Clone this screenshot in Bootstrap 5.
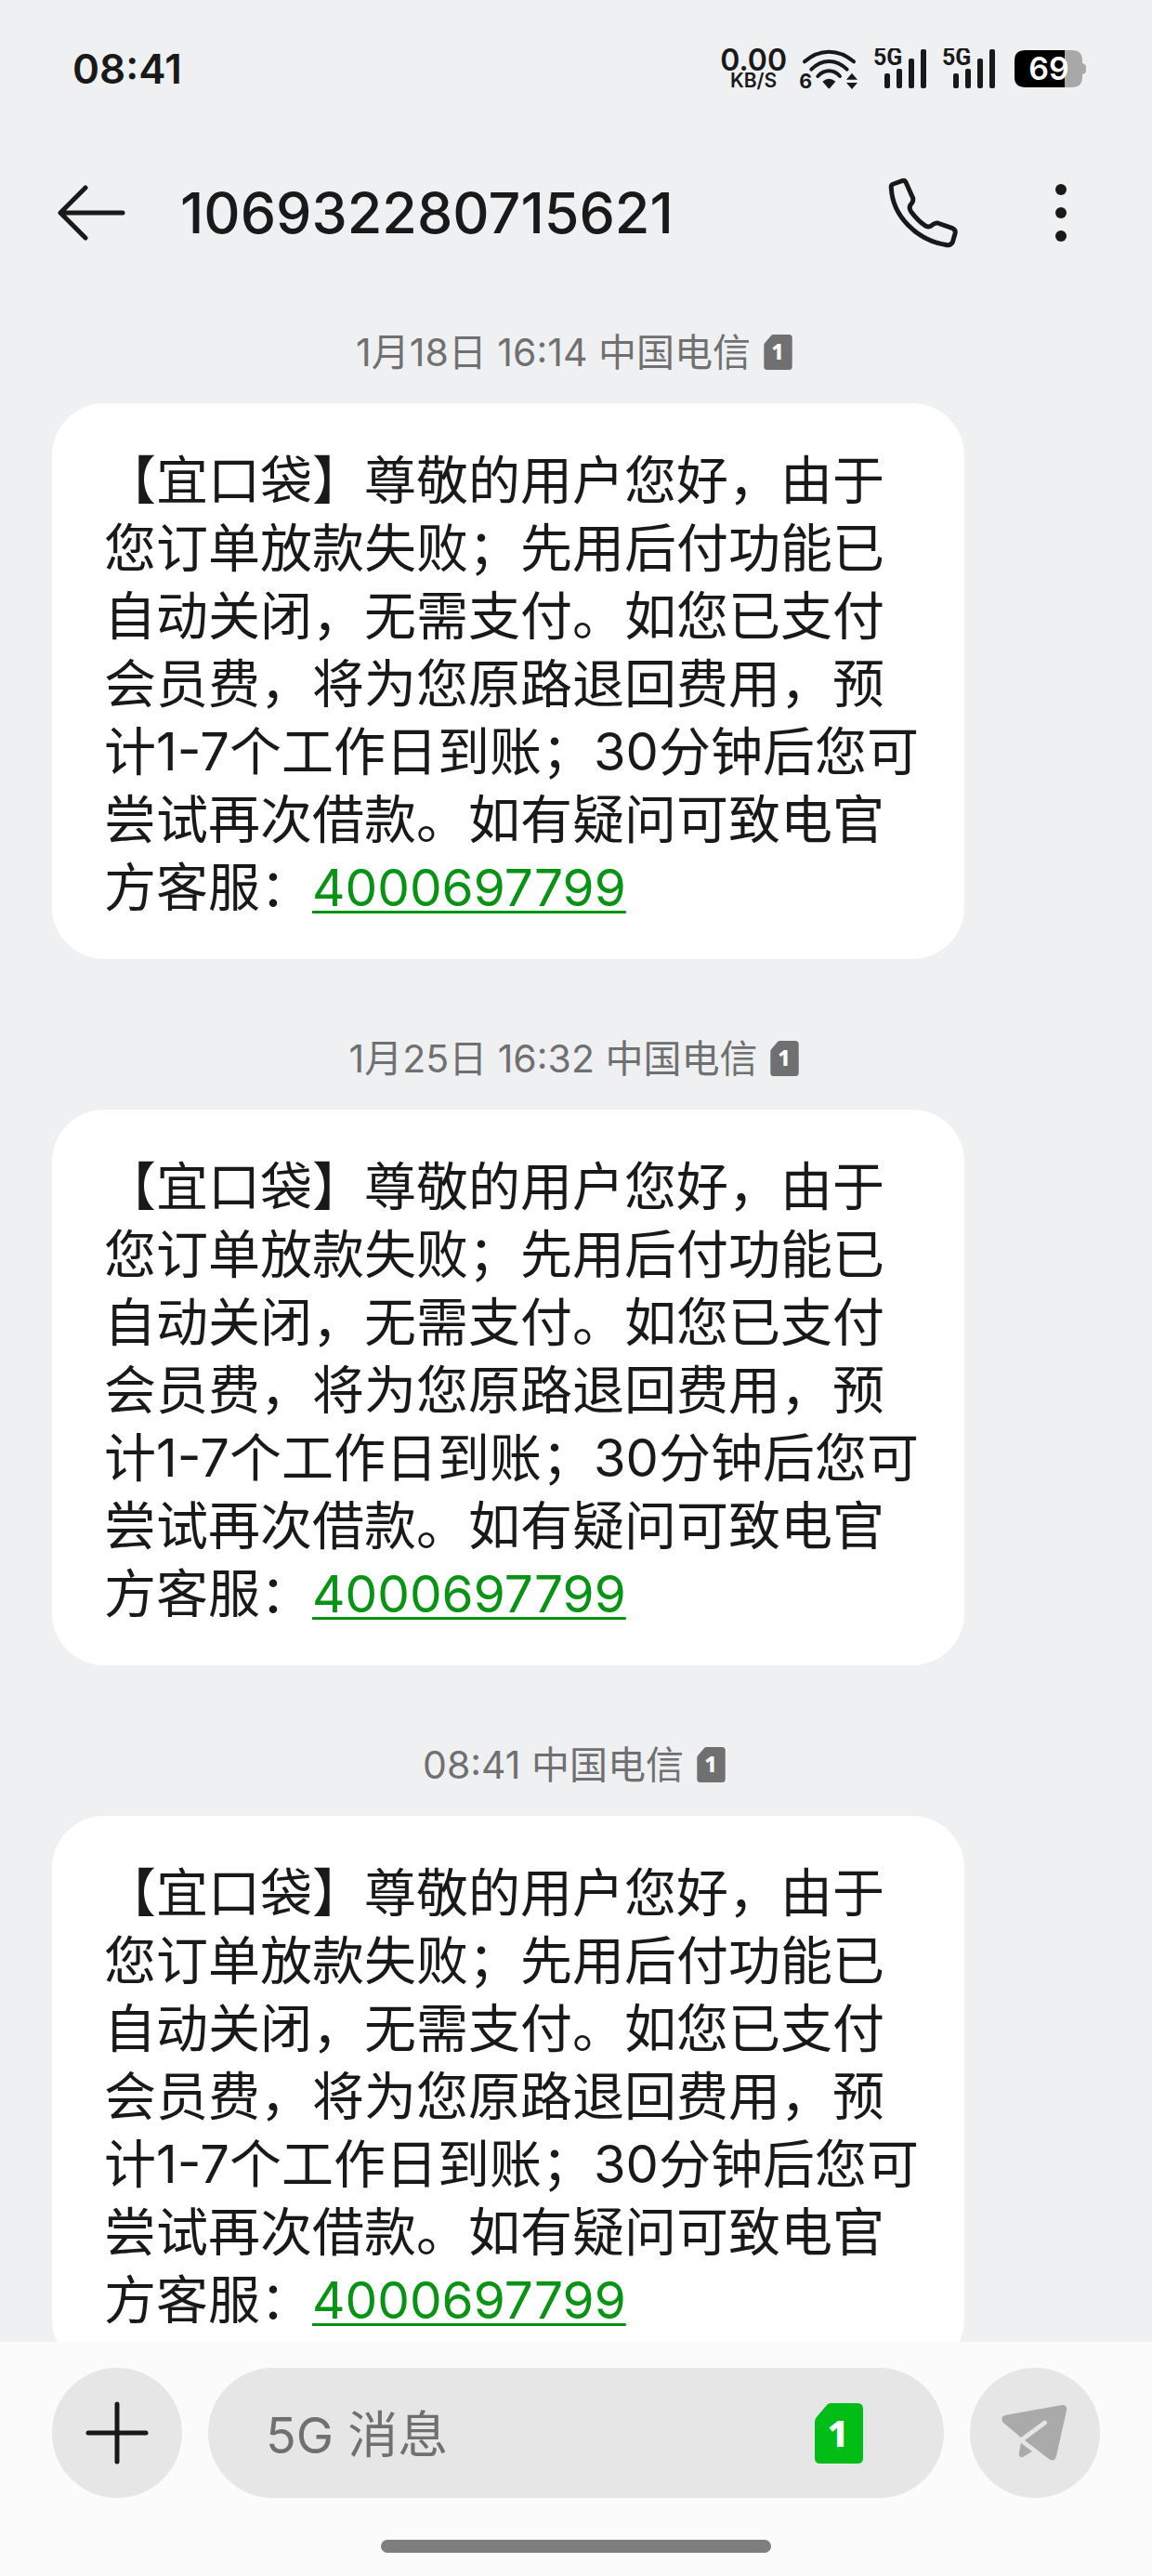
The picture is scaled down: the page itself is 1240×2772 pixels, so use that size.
<!DOCTYPE html>
<html lang="zh-CN">
<head>
<meta charset="utf-8">
<meta name="viewport" content="width=device-width, initial-scale=1">
<title>106932280715621</title>
<link href="https://cdn.jsdelivr.net/npm/bootstrap@5.3.0/dist/css/bootstrap.min.css" rel="stylesheet">
<style>
  body { font-family: Inter, "Noto Sans CJK SC", sans-serif; background: #eff0f2; color: #191919; }
  svg { display: block; flex: none; overflow: visible; }
  .status-bar { height: 148px; padding: 0 70px 0 78px; }
  .clock { font-size: 44px; line-height: 48px; font-weight: 600; }
  .status-icons { gap: 17px; }
  .net-speed { font-size: 32px; line-height: 26px; font-weight: 600; text-align: center; margin-right: -4px; }
  .net-unit { font-size: 21px; line-height: 18px; }
  .battery { margin-left: 3px; }
  .chat-header { height: 162px; padding: 0 80px 0 56px; }
  .plain-btn { background: none; border: 0; padding: 0; color: inherit; }
  .sender { font-size: 61px; line-height: 72px; font-weight: 500; margin-left: 54px; }
  .header-actions { gap: 92px; }
  .thread { min-height: 0; padding: 44px 56px 0; }
  .stamp { color: #707070; font-size: 41px; line-height: 50px; gap: 14px; margin-bottom: 30px; padding-right: 4px; }
  .bubble { background: #fff; width: 87.1%; border-radius: 56px; padding: 47px 40px 40px 56px; margin-bottom: 82px; font-size: 56px; line-height: 73px; }
  .bubble a { color: #079414; text-decoration-thickness: 3px; text-underline-offset: 5px; font-size: 55px; }
  .composer { background: #fbfbfb; padding: 28px 56px 25px; }
  .round-btn { width: 140px; height: 140px; border: 0; padding: 0; border-radius: 50%; background: #e6e6e6; color: #191919; }
  .compose-row { gap: 28px; }
  .entry { height: 140px; border-radius: 70px; background: #e6e6e6; padding: 0 87px 0 62px; }
  .entry input, .entry input:focus { background: none; border: 0; box-shadow: none; padding: 6px 0 0; font-size: 54px; line-height: 72px; color: #191919; }
  .entry input::placeholder { color: #707070; }
  .home-bar { width: 420px; height: 14px; border-radius: 7px; background: #7e7e7e; margin-top: 45px; }
</style>
</head>
<body class="vh-100 d-flex flex-column overflow-hidden">

<svg width="0" height="0" class="d-none" aria-hidden="true">
  <symbol id="signal" viewBox="0 0 57 44">
    <text x="-1" y="18" font-family="Roboto, sans-serif" font-weight="700" font-size="25">5G</text>
    <rect x="11" y="27" width="6" height="16" rx="2"/>
    <rect x="24" y="22" width="6" height="21" rx="2"/>
    <rect x="37" y="11" width="6" height="32" rx="2"/>
    <rect x="50" y="1" width="6" height="42" rx="2"/>
  </symbol>
  <symbol id="sim" viewBox="0 0 52 65">
    <path fill="currentColor" d="M17 0H46Q52 0 52 6V59Q52 65 46 65H6Q0 65 0 59V20Q0 17 2 15L13 2Q15 0 17 0Z"/>
    <text x="25" y="47" text-anchor="middle" fill="#fff" font-family="'Noto Sans', sans-serif" font-weight="800" font-size="40">1</text>
  </symbol>
</svg>

<div class="status-bar d-flex align-items-center justify-content-between flex-shrink-0">
  <div class="clock">08:41</div>
  <div class="status-icons d-flex align-items-center">
    <div class="net-speed">0.00<div class="net-unit">KB/S</div></div>
    <svg width="64" height="46" viewBox="309 60 192 138" fill="#191919">
      <g fill="none" stroke="#191919" stroke-width="12" stroke-linecap="round">
        <path d="M327 106Q363 74 406 74T486 106"/>
        <path d="M349 131Q375 105 406 105T464 131"/>
        <path d="M370 153Q386 136 406 136T441 153"/>
      </g>
      <path d="M385 170Q406 153 427 170L409 191Q406 194 403 191Z"/>
      <path d="M462 164L480 143L498 164ZM462 174H498L480 195Z"/>
      <text x="310" y="193" font-family="Inter, sans-serif" font-weight="700" font-size="64">6</text>
    </svg>
    <svg width="57" height="44" fill="#191919"><use href="#signal"/></svg>
    <svg width="57" height="44" fill="#191919"><use href="#signal"/></svg>
    <svg class="battery" width="78" height="40" viewBox="0 0 78 40">
      <path d="M54 0H62Q73 0 73 11V14Q77 15 77 18V22Q77 25 73 26V29Q73 40 62 40H54Z" fill="#a8a8a8"/>
      <path d="M54 0H12Q0 0 0 11V29Q0 40 12 40H54Z" fill="#000"/>
      <text x="37" y="32" text-anchor="middle" fill="#fff" font-family="Inter, sans-serif" font-weight="600" font-size="34">69</text>
    </svg>
  </div>
</div>

<header class="chat-header d-flex align-items-center flex-shrink-0">
  <button type="button" class="plain-btn" aria-label="返回">
    <svg width="84" height="64" viewBox="0 0 84 64" fill="none" stroke="#191919" stroke-width="5" stroke-linecap="round" stroke-linejoin="round"><path d="M36 5L9 32L36 59M9 32H76"/></svg>
  </button>
  <h1 class="sender mb-0">106932280715621</h1>
  <div class="header-actions d-flex align-items-center ms-auto">
    <button type="button" class="plain-btn" aria-label="拨打电话">
      <svg width="78" height="78" viewBox="104 64 234 234" fill="none" stroke="#191919" stroke-width="15" stroke-linejoin="round"><path d="M120 102Q118 91 127 88L155 78Q164 75 168 84L190 134Q192 143 186 150C176 160 178 168 184 177C198 196 215 213 232 224Q242 229 250 222Q260 212 270 214L318 231Q329 236 326 248L318 276Q312 287 300 285C200 270 125 190 120 102Z"/></svg>
    </button>
    <button type="button" class="plain-btn" aria-label="更多">
      <svg width="36" height="64" viewBox="0 0 36 64" fill="#191919"><circle cx="18" cy="7" r="6"/><circle cx="18" cy="32" r="6"/><circle cx="18" cy="57" r="6"/></svg>
    </button>
  </div>
</header>

<main class="thread flex-grow-1 overflow-hidden">
  <div class="stamp d-flex align-items-center justify-content-center"><span>1月18日 16:14 中国电信</span><svg width="31" height="38"><use href="#sim"/></svg></div>
  <div class="bubble">【宜口袋】尊敬的用户您好，由于您订单放款失败；先用后付功能已自动关闭，无需支付。如您已支付会员费，将为您原路退回费用，预计1-7个工作日到账；30分钟后您可尝试再次借款。如有疑问可致电官方客服：<a href="tel:4000697799">4000697799</a></div>
  <div class="stamp d-flex align-items-center justify-content-center"><span>1月25日 16:32 中国电信</span><svg width="31" height="38"><use href="#sim"/></svg></div>
  <div class="bubble">【宜口袋】尊敬的用户您好，由于您订单放款失败；先用后付功能已自动关闭，无需支付。如您已支付会员费，将为您原路退回费用，预计1-7个工作日到账；30分钟后您可尝试再次借款。如有疑问可致电官方客服：<a href="tel:4000697799">4000697799</a></div>
  <div class="stamp d-flex align-items-center justify-content-center"><span>08:41 中国电信</span><svg width="31" height="38"><use href="#sim"/></svg></div>
  <div class="bubble">【宜口袋】尊敬的用户您好，由于您订单放款失败；先用后付功能已自动关闭，无需支付。如您已支付会员费，将为您原路退回费用，预计1-7个工作日到账；30分钟后您可尝试再次借款。如有疑问可致电官方客服：<a href="tel:4000697799">4000697799</a></div>
</main>

<footer class="composer flex-shrink-0">
  <form class="compose-row d-flex align-items-center">
    <button type="button" class="round-btn d-flex align-items-center justify-content-center flex-shrink-0" aria-label="添加">
      <svg width="70" height="70" viewBox="0 0 70 70" fill="none" stroke="#191919" stroke-width="5" stroke-linecap="round"><path d="M35 4V66M4 35H66"/></svg>
    </button>
    <div class="entry d-flex align-items-center flex-grow-1">
      <input type="text" class="form-control flex-grow-1" placeholder="5G 消息" aria-label="5G 消息">
      <button type="button" class="plain-btn" aria-label="SIM 卡 1"><svg width="52" height="65" color="#02bd15"><use href="#sim"/></svg></button>
    </div>
    <button type="submit" class="round-btn d-flex align-items-center justify-content-center flex-shrink-0" aria-label="发送">
      <svg width="72" height="62" viewBox="0 0 72 62" fill="#aaa">
        <path d="M4 12L65 1Q71 0 70 7L59 56Q57 63 51 59L25 39L48 22Q50 20 48 18Q46 17 44 19L21 36L2 20Q-2 14 4 12Z"/>
        <path d="M21 42L33 51L23 57Q18 58 19 52Z"/>
      </svg>
    </button>
  </form>
  <div class="home-bar mx-auto"></div>
</footer>

<script src="https://cdn.jsdelivr.net/npm/bootstrap@5.3.0/dist/js/bootstrap.bundle.min.js"></script>
</body>
</html>
